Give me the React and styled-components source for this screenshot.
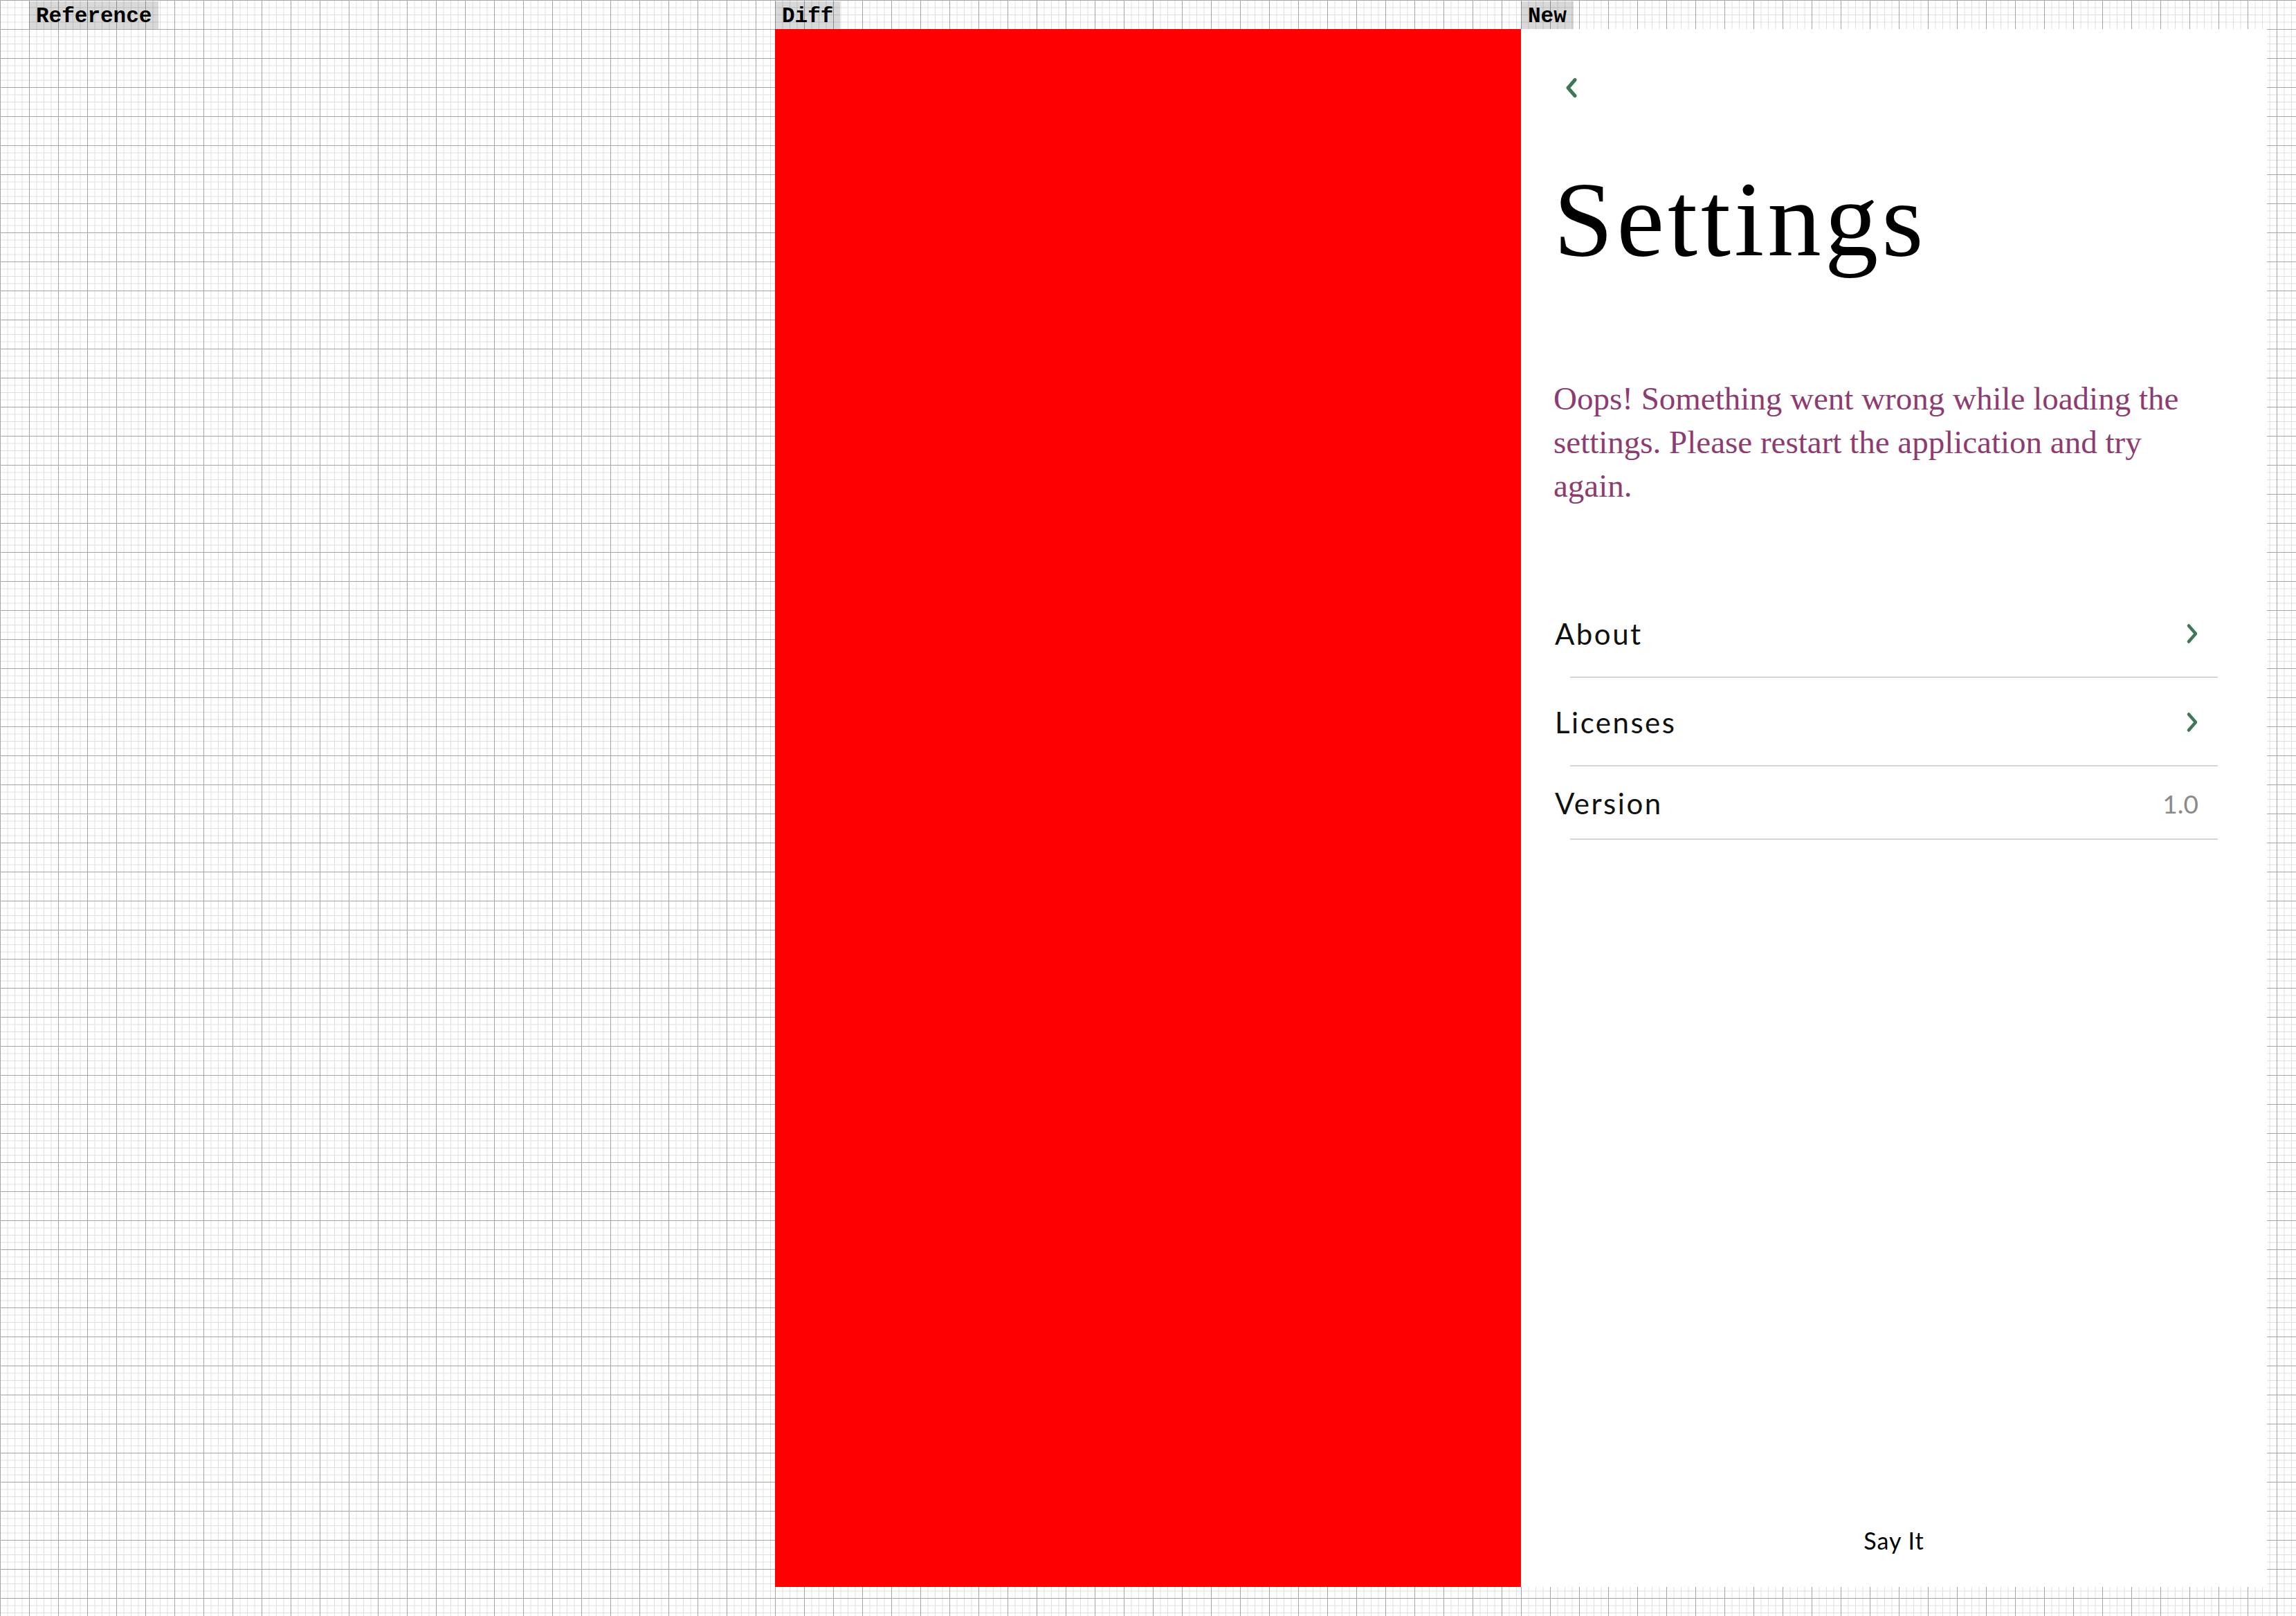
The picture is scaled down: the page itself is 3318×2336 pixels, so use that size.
import React from "react";
import styled, { createGlobalStyle } from "styled-components";

const GlobalStyle = createGlobalStyle`
  html, body {
    margin: 0;
    padding: 0;
    background: #fff;
  }
  * {
    box-sizing: border-box;
  }
`;

function BackIcon() {
  return (
    <svg width="20" height="30" viewBox="0 0 20 30">
      <path
        d="M15 3.5 L5 15 L15 26.5"
        fill="none"
        stroke="#3d7658"
        strokeWidth="5"
        strokeLinecap="round"
        strokeLinejoin="round"
      />
    </svg>
  );
}

function ChevronIcon() {
  return (
    <svg width="18" height="30" viewBox="0 0 18 30">
      <path
        d="M4 3.5 L14 15 L4 26.5"
        fill="none"
        stroke="#3d7658"
        strokeWidth="4.5"
        strokeLinecap="round"
        strokeLinejoin="round"
      />
    </svg>
  );
}

const rows = [
  { label: "About", link: true },
  { label: "Licenses", link: true },
  { label: "Version", value: "1.0" },
];

function App() {
  return (
    <>
      <GlobalStyle />
      <Page>
        <Column $first>
          <Label>Reference</Label>
          <Panel />
        </Column>
        <Column>
          <Label>Diff</Label>
          <Panel $fill="#ff0000" />
        </Column>
        <Column $last>
          <Label>New</Label>
          <Screen>
            <TopBar>
              <BackIcon />
            </TopBar>
            <Title>Settings</Title>
            <ErrorText>
              Oops! Something went wrong while loading the settings. Please
              restart the application and try again.
            </ErrorText>
            <List>
              {rows.map((row) => (
                <Row key={row.label} $tall={row.link}>
                  <RowLabel>{row.label}</RowLabel>
                  {row.link ? <ChevronIcon /> : <RowValue>{row.value}</RowValue>}
                </Row>
              ))}
            </List>
            <Footer>Say It</Footer>
          </Screen>
        </Column>
      </Page>
    </>
  );
}

export default App;

const Page = styled.div`
  display: flex;
  width: 3318px;
  height: 2336px;
  overflow: hidden;
`;

const Column = styled.div`
  display: flex;
  flex-direction: column;
  flex: none;
  width: ${(p) => (p.$first || p.$last ? "1120px" : "1078px")};
  padding-top: 2px;
  padding-left: ${(p) => (p.$first ? "42px" : "0")};
  padding-right: ${(p) => (p.$last ? "42px" : "0")};
  background-color: #fff;
  background-image: linear-gradient(to right, #a6a6a6 1px, transparent 1px),
    linear-gradient(to bottom, #a6a6a6 1px, transparent 1px),
    linear-gradient(to right, #dedede 1px, transparent 1px),
    linear-gradient(to bottom, #dedede 1px, transparent 1px);
  background-size: 42px 42px, 42px 42px, 10.5px 10.5px, 10.5px 10.5px;
`;

const Label = styled.div`
  align-self: flex-start;
  height: 40px;
  padding: 3px 10px 0;
  line-height: 37px;
  background: rgba(0, 0, 0, 0.15);
  font-family: "Liberation Mono", "Courier New", monospace;
  font-weight: 700;
  font-size: 31px;
  color: #000;
`;

const Panel = styled.div`
  height: 2252px;
  background: ${(p) => p.$fill || "transparent"};
`;

const Screen = styled.div`
  display: flex;
  flex-direction: column;
  height: 2252px;
  padding: 0 47px;
  background: #fff;
`;

const TopBar = styled.div`
  display: flex;
  align-items: center;
  padding-top: 70px;
  padding-left: 16px;
  height: 100px;
`;

const Title = styled.h1`
  margin: 98px 0 0;
  font-family: "Liberation Serif", "Times New Roman", serif;
  font-weight: 400;
  font-size: 155px;
  line-height: 155px;
  letter-spacing: 5px;
  color: #000;
`;

const ErrorText = styled.p`
  margin: 150px 0 0;
  max-width: 950px;
  font-family: "Liberation Serif", "Times New Roman", serif;
  font-size: 47px;
  line-height: 63px;
  color: #8e3b6f;
`;

const List = styled.div`
  display: flex;
  flex-direction: column;
  margin: 118px 24px 0 0;
`;

const Row = styled.div`
  display: flex;
  align-items: center;
  justify-content: space-between;
  height: ${(p) => (p.$tall ? "128px" : "106px")};
  padding-right: 28px;
  background: linear-gradient(#d6d6d6, #d6d6d6) no-repeat right bottom / calc(100% - 24px) 2px;
`;

const RowLabel = styled.span`
  padding-left: 2px;
  font-family: Lato, "Noto Sans", sans-serif;
  font-size: 42px;
  letter-spacing: 2.5px;
  color: #111;
`;

const RowValue = styled.span`
  font-family: Lato, "Noto Sans", sans-serif;
  font-size: 37px;
  color: #8a8a8a;
`;

const Footer = styled.div`
  margin-top: auto;
  padding-bottom: 47px;
  text-align: center;
  font-family: Lato, "Noto Sans", sans-serif;
  font-size: 34px;
  letter-spacing: 1px;
  color: #000;
`;
